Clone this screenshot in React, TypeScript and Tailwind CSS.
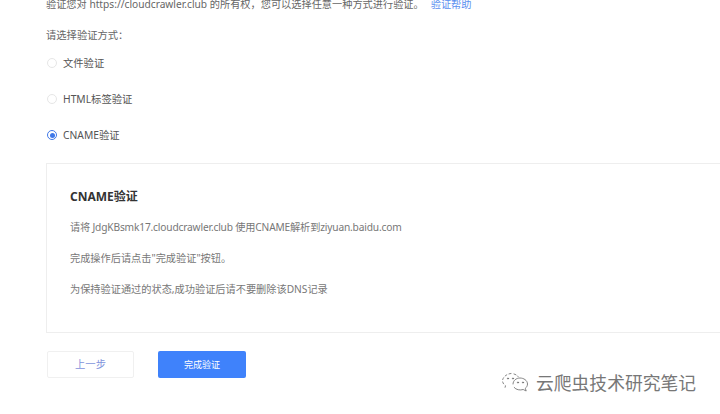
import React from "react";

const FONT = "[font-family:'Noto_Sans','Noto_Sans_CJK_SC',sans-serif]";

function Radio({ label, checked }: { label: string; checked?: boolean }) {
  return (
    <label className="flex h-[12px] items-center gap-[6px] pl-px text-[10.3px] leading-[12px] text-[#555]">
      <span
        className={
          checked
            ? "grid size-[10px] place-items-center rounded-full border border-[#3f78e8] bg-white"
            : "size-[10px] rounded-full border border-[#e6e6e6] bg-white"
        }
      >
        {checked && <span className="size-[5px] rounded-full bg-[#3f78e8]" />}
      </span>
      {label}
    </label>
  );
}

// WeChat official-account mark, bottom right
function WechatMark() {
  return (
    <svg width="30" height="26" viewBox="0 0 30 26" fill="none" stroke="#777" strokeWidth="0.9" strokeLinecap="round" aria-hidden="true">
      <path d="M10 3.500c-4.500.5-8 3.500-8.500 7 0 2.200 1.200 4 3 5.200l-.5 2" strokeDasharray="2 2.400" />
      <path d="M13 4c2 .6 3.500 1.600 4.200 2.800" strokeDasharray="2 2" />
      <circle cx="7" cy="8.500" r="0.6" fill="#777" />
      <circle cx="12" cy="8.500" r="0.6" fill="#777" />
      <path d="M12 14c0-3.600 3.400-6 7-6s7.500 2.400 7.500 6c0 1.800-.9 3.300-2.200 4.300l.9 2.700-3-1.500c-3 1-7.200.4-9-2" />
      <circle cx="17" cy="12.500" r="0.6" fill="#777" />
      <circle cx="22" cy="12.500" r="0.6" fill="#777" />
    </svg>
  );
}

export default function App() {
  return (
    <div className={`relative h-[414px] w-[720px] overflow-hidden bg-white pl-[46px] ${FONT}`}>
      <p className="-mt-[3px] h-[14px] whitespace-nowrap text-[10.2px] leading-[14px] text-[#666]">
        验证您对 https://cloudcrawler.club 的所有权，您可以选择任意一种方式进行验证。
        <a className="ml-[7px] text-[#5b8ff0]">验证帮助</a>
      </p>

      <p className="mt-[17px] text-[10.3px] leading-[14px] text-[#666]">请选择验证方式：</p>

      <div className="mt-[15px] flex flex-col gap-[24px]">
        <Radio label="文件验证" />
        <Radio label="HTML标签验证" />
        <Radio label="CNAME验证" checked />
      </div>

      <section className="mt-[22px] h-[170px] w-[700px] border border-[#eeeeee] pl-[23px] pt-[25px]">
        <h2 className="text-[12px] leading-[16px] font-bold text-[#333]">CNAME验证</h2>
        <div className="mt-[15px] flex flex-col gap-[17px] text-[10.2px] leading-[14px] text-[#777]">
          <p className="tracking-[-0.17px]">请将 JdgKBsmk17.cloudcrawler.club 使用CNAME解析到ziyuan.baidu.com</p>
          <p>完成操作后请点击"完成验证"按钮。</p>
          <p>为保持验证通过的状态,成功验证后请不要删除该DNS记录</p>
        </div>
      </section>

      <div className="mt-[18px] flex gap-[24px] pl-px">
        <button className="h-[27px] w-[87px] rounded-[2px] border border-[#f0f0f0] bg-white text-[10.3px] text-[#7f93dc]">
          上一步
        </button>
        <button className="h-[27px] w-[88px] rounded-[2px] bg-[#3f82fb] text-[9px] text-white">完成验证</button>
      </div>

      <div className="absolute left-[501px] top-[370px] flex items-center gap-[5px]">
        <WechatMark />
        <span className="whitespace-nowrap text-[17.8px] leading-[26px] text-[#777] [text-shadow:1px_1px_0_#fff]">
          云爬虫技术研究笔记
        </span>
      </div>
    </div>
  );
}
